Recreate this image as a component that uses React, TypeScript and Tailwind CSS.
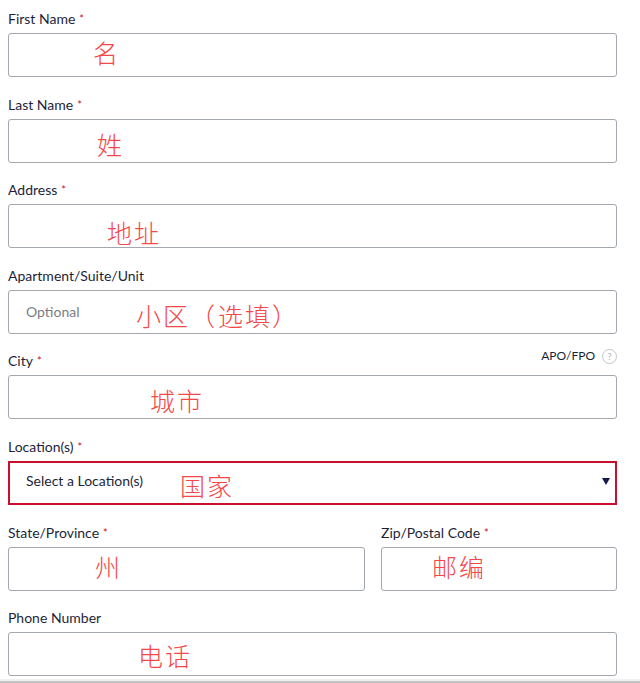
import { ReactNode } from "react";

const labelFont = { fontFamily: "Lato, 'Open Sans', sans-serif" };

function Label({ text, required }: { text: string; required?: boolean }) {
  return (
    <label className="h-5 pt-[1px] text-[14px] leading-5 text-[#1d1f3a]" style={labelFont}>
      {text}
      {required && <span className="relative -top-[1px] ml-1 text-[11px] text-[#c8102e]">*</span>}
    </label>
  );
}

function Note({ children, className }: { children: ReactNode; className: string }) {
  return (
    <span
      className={"absolute text-[25px] leading-none font-light tracking-[2px] text-[#f44848] whitespace-nowrap pointer-events-none " + className}
      style={{ fontFamily: "'Noto Sans CJK SC', sans-serif" }}
    >
      {children}
    </span>
  );
}

function Box({ children }: { children?: ReactNode }) {
  return <div className="relative h-11 rounded-[3px] border border-[#a3a7b0] bg-white">{children}</div>;
}

function Field({ label, required, right, children }: { label: string; required?: boolean; right?: ReactNode; children: ReactNode }) {
  return (
    <div className="flex flex-col gap-[5px] mb-[16.6px]">
      <div className="flex h-5 items-center justify-between">
        <Label text={label} required={required} />
        {right}
      </div>
      {children}
    </div>
  );
}

export default function App() {
  return (
    <main className="min-h-screen bg-white" style={labelFont}>
      <div className="w-[609px] ml-2 pt-2">
        <Field label="First Name" required>
          <Box>
            <Note className="left-[84px] top-[6px]">名</Note>
          </Box>
        </Field>
        <Field label="Last Name" required>
          <Box>
            <Note className="left-[88px] top-[12px]">姓</Note>
          </Box>
        </Field>
        <Field label="Address" required>
          <Box>
            <Note className="left-[98px] top-[15px]">地址</Note>
          </Box>
        </Field>
        <Field label="Apartment/Suite/Unit">
          <Box>
            <span className="absolute left-[17px] top-[10px] text-[14px] text-[#7a7d85]">Optional</span>
            <Note className="left-[127px] top-[12px]">
              小区<span className="inline-block w-[28px] text-left">（</span>选填<span className="inline-block w-6 text-left">）</span>
            </Note>
          </Box>
        </Field>
        <Field
          label="City"
          required
          right={
            <span className="flex items-center gap-[7px] text-[12px] text-[#1d1f3a] -mt-2">
              APO/FPO
              <span className="flex h-[15px] w-[15px] items-center justify-center rounded-full border border-[#c4c6cb] text-[10px] leading-none text-[#b0b3b9]">
                ?
              </span>
            </span>
          }
        >
          <Box>
            <Note className="left-[141px] top-[12px]">城市</Note>
          </Box>
        </Field>
        <Field label="Location(s)" required>
          <div className="relative h-11 border-2 border-[#c8102e] bg-white flex items-center justify-between pl-4 pr-[5px]">
            <span className="text-[14px] text-[#1d1f3a] -mt-[5px]">Select a Location(s)</span>
            <svg width="8" height="7" viewBox="0 0 8 7" className="-mt-[3px]">
              <path d="M0 0h8L4 7z" fill="#14194a" />
            </svg>
            <Note className="left-[170px] top-[10px]">国家</Note>
          </div>
        </Field>
        <div className="flex gap-4">
          <div className="w-[357px]">
            <Field label="State/Province" required>
              <Box>
                <Note className="left-[86px] top-[6px]">州</Note>
              </Box>
            </Field>
          </div>
          <div className="flex-1">
            <Field label="Zip/Postal Code" required>
              <Box>
                <Note className="left-[50px] top-[6px]">邮编</Note>
              </Box>
            </Field>
          </div>
        </div>
        <Field label="Phone Number">
          <Box>
            <Note className="left-[129px] top-[10px]">电话</Note>
          </Box>
        </Field>
      </div>
      <div className="fixed left-0 right-0 top-[679px] h-[4px] border-t-2 border-[#f0f0f0] bg-[#c4c4c4]" />
    </main>
  );
}
